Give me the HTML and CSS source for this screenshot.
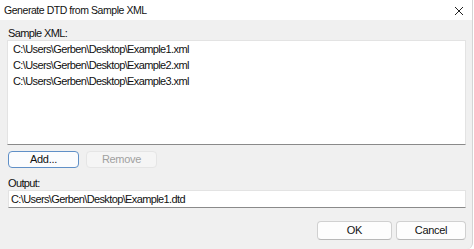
FILE: index.html
```html
<!DOCTYPE html>
<html lang="en">
<head>
  <meta charset="UTF-8" />
  <title>Generate DTD from Sample XML</title>
  <link rel="stylesheet" href="styles.css">
</head>
<body>
  <div class="window">
    <div class="titlebar">
      <span class="title">Generate DTD from Sample XML</span>
      <svg class="close" width="10" height="10" viewBox="0 0 10 10">
        <path d="M1 1L9 9M9 1L1 9" stroke="#222" stroke-width="1" fill="none"/>
      </svg>
    </div>

    <div class="content">
      <div class="label first">Sample XML:</div>
      <div class="listbox">
        <div class="item">C:\Users\Gerben\Desktop\Example1.xml</div>
        <div class="item">C:\Users\Gerben\Desktop\Example2.xml</div>
        <div class="item">C:\Users\Gerben\Desktop\Example3.xml</div>
      </div>

      <div class="button-row">
        <button class="btn focused">Add...</button>
        <button class="btn" disabled>Remove</button>
      </div>

      <div class="label">Output:</div>
      <div class="textbox">C:\Users\Gerben\Desktop\Example1.dtd</div>

      <div class="dialog-buttons">
        <button class="btn wide">OK</button>
        <button class="btn wide">Cancel</button>
      </div>
    </div>
  </div>
</body>
</html>
```

FILE: styles.css
```css
body {
  margin: 0;
  padding: 0;
  width: 474px;
  height: 249px;
  overflow: hidden;
  background: #ffffff;
  font-family: "Liberation Sans", Arial, sans-serif;
  font-size: 11px;
  letter-spacing: -0.62px;
  color: #111111;
}
.window {
  width: 473px;
  height: 249px;
  background: #f0f0f0;
  border-right: 1px solid #d4d4d4;
  border-radius: 0 0 6px 0;
  box-sizing: border-box;
}
.titlebar {
  height: 20px;
  background: #ffffff;
  display: flex;
  align-items: center;
  justify-content: space-between;
  padding: 0 8px 0 4px;
  font-size: 10.5px;
  letter-spacing: -0.45px;
}
.close {
  margin-top: 2px;
}
.content {
  padding: 0 6px 0 7px;
}
.label {
  height: 12px;
  line-height: 12px;
  margin-top: 9px;
  padding-left: 1px;
}
.label.first {
  margin-top: 7px;
  margin-bottom: 1px;
}
.listbox {
  height: 105px;
  background: #ffffff;
  border: 1px solid #e3e3e3;
  border-bottom-color: #8a8a8a;
  box-sizing: border-box;
}
.item {
  height: 16px;
  line-height: 16px;
  padding-left: 5px;
}
.button-row {
  display: flex;
  gap: 7px;
  margin-top: 6px;
  padding-left: 1px;
}
.btn {
  width: 71px;
  height: 17px;
  padding: 0;
  font-family: inherit;
  font-size: 11px;
  letter-spacing: -0.3px;
  line-height: 15px;
  background: #fdfdfd;
  border: 1px solid #d0d0d0;
  border-bottom-color: #b8b8b8;
  border-radius: 4px;
  color: #111111;
}
.btn.focused {
  border-color: #5f8fc7;
  background: #fbfcfe;
}
.btn:disabled {
  background: #f5f5f5;
  border-color: #e5e5e5;
  color: #a0a0a0;
}
.textbox {
  height: 18px;
  line-height: 17px;
  margin-top: 1px;
  margin-left: 1px;
  padding-left: 2px;
  background: #ffffff;
  border: 1px solid #e3e3e3;
  border-bottom-color: #8a8a8a;
  box-sizing: border-box;
}
.dialog-buttons {
  display: flex;
  justify-content: flex-end;
  gap: 4px;
  margin-top: 13px;
}
.btn.wide {
  width: 75px;
  height: 19px;
  line-height: 17px;
}
.btn.wide:last-child {
  width: 70px;
}
```
